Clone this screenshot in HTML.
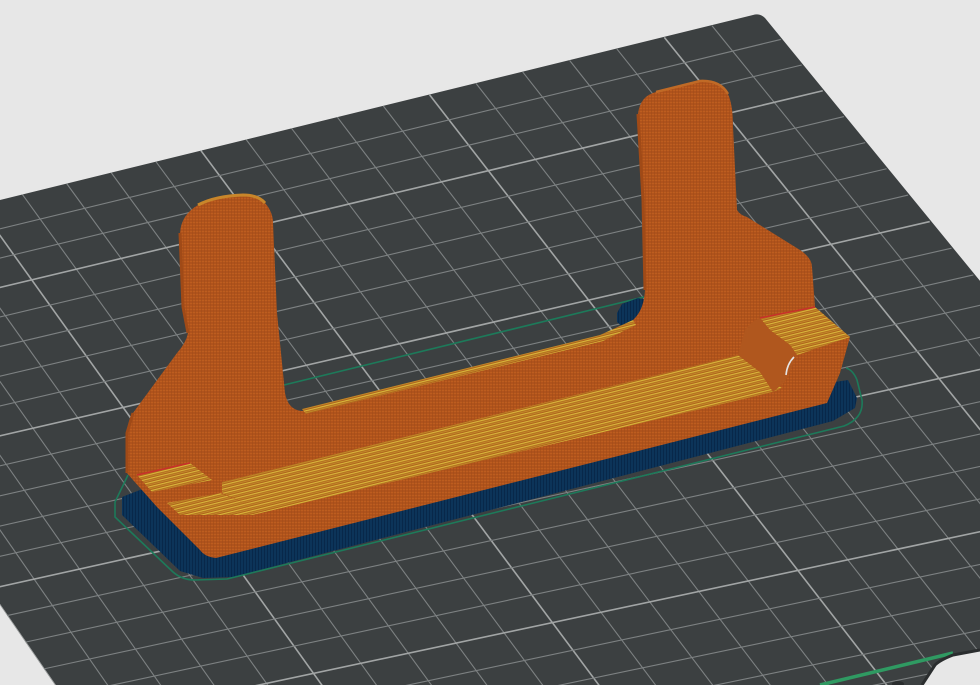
<!DOCTYPE html>
<html><head><meta charset="utf-8"><style>
html,body{margin:0;padding:0;background:#e7e7e7;overflow:hidden;width:980px;height:685px}
svg{display:block}
</style></head><body>
<svg id="s" width="980" height="685" viewBox="0 0 980 685" xmlns="http://www.w3.org/2000/svg">
<defs>
<clipPath id="pc"><path d="M0,200 L753,15 Q760,13 765,18 L1290,660 L980,660 L980,650 L953,655 Q940,660 935,665 L922,685 L55,685 L0,605 Z"/></clipPath>
<pattern id="po" width="3" height="3" patternUnits="userSpaceOnUse"><rect width="3" height="3" fill="#b0531c"/><rect width="3" height="1" fill="#bd5d1f"/><rect x="0" y="0" width="1" height="3" fill="#a24c19" opacity=".6"/></pattern>
<pattern id="py" width="4" height="4" patternUnits="userSpaceOnUse" patternTransform="rotate(-14)"><rect width="4" height="4" fill="#b0621d"/><rect width="4" height="1.2" fill="#d8b83a"/><rect y="2" width="4" height="1" fill="#c08a28"/></pattern>
<pattern id="pb" width="3" height="3" patternUnits="userSpaceOnUse"><rect width="3" height="3" fill="#0c3459"/><rect width="1" height="3" fill="#08284a"/></pattern>
</defs>
<path d="M0,200 L753,15 Q760,13 765,18 L1290,660 L980,660 L980,650 L953,655 Q940,660 935,665 L922,685 L55,685 L0,605 Z" fill="#3c4041"/>
<g id="grid" clip-path="url(#pc)"></g>
<path d="M820,685 L953,653" stroke="#2f9a62" stroke-width="3.5" fill="none"/>
<path d="M922,685 L935,665 Q940,660 953,655 L980,650" stroke="#2a2d2e" stroke-width="3" fill="none"/>
<ellipse cx="898" cy="684" rx="6" ry="3" fill="#2a2d2e"/>
<path d="M284,385 L644,297" stroke="#1d7a5a" stroke-width="1.6" fill="none"/>
<path d="M617,313 L622,304 L638,298 L646,300 L646,326 L626,330 L617,322 Z" fill="url(#pb)"/>
<path d="M122,497 L140,490 L848,380 L857,398 L855,408 L833,421 L233,577 L203,578 L180,571 L122,515 Z" fill="url(#pb)"/>
<path d="M128,475 L115,502 L115,517 L173,572 Q182,580 195,580 L227,579 L844,426 Q864,418 862,400 L857,380 Q853,370 846,368" stroke="#1d7a5a" stroke-width="1.6" fill="none"/>
<path d="M198,205 Q215,196 243,195 Q258,195 265,203 Q273,212 273,223 L277,313 L285,393 Q288,410 302,411 L600,337 L633,320 Q644,310 645,290 L643,200 L638,114 Q640,96 656,92 L700,81 Q720,80 728,94 Q733,105 733,127 L737,210 Q740,215 747,217 L800,250 Q812,258 812,267 L815,307 L850,337 L840,373 L827,403 L216,558 Q205,557 200,550 L157,507 L133,480 L127,473 L127,433 Q128,420 133,413 L177,353 Q186,343 188,333 L183,307 L180,233 Q181,215 198,205 Z" fill="url(#po)"/>
<path d="M198,205 Q215,196 243,195 Q258,195 265,203" stroke="#c9862a" stroke-width="3" fill="none"/>
<path d="M656,92 L700,81 Q720,80 728,94" stroke="#c06a26" stroke-width="2.5" fill="none"/>
<path d="M180,233 L183,307 L188,333 M133,413 L127,433 L127,473 M638,114 L643,200 L645,290" stroke="#a04a17" stroke-width="3" fill="none"/>
<path d="M302,409 L600,335 L633,320 L636,325 L603,341 L306,414 Z" fill="url(#py)"/>
<path d="M222,482 L738,355 L760,372 L782,388 L773,392 L252,515 L245,503 L222,493 Z" fill="url(#py)"/>
<path d="M137,475 L190,463 L203,473 L212,480 L152,492 Z" fill="url(#py)"/>
<path d="M167,503 L220,493 L245,503 L252,515 L180,515 Z" fill="url(#py)"/>
<path d="M137,475 L190,463" stroke="#c8302a" stroke-width="1.5"/>
<path d="M760,318 L815,307 L850,337 L797,355 L790,345 L770,330 Z" fill="url(#py)"/>
<path d="M760,318 L815,307" stroke="#c8302a" stroke-width="1.5"/>
<path d="M738,355 L745,330 Q750,322 760,318 L770,330 L790,345 L797,355 L785,382 L773,392 L760,372 Z" fill="#b0571e"/>
<path d="M794,357 Q787,364 786,375" stroke="#e5e5e5" stroke-width="1.6" fill="none"/>
</svg>
<script>
(function(){
function solve(A,b){var n=b.length;for(var i=0;i<n;i++){var p=i;for(var k=i+1;k<n;k++)if(Math.abs(A[k][i])>Math.abs(A[p][i]))p=k;var t=A[i];A[i]=A[p];A[p]=t;var tb=b[i];b[i]=b[p];b[p]=tb;for(var k=i+1;k<n;k++){var f=A[k][i]/A[i][i];for(var j=i;j<n;j++)A[k][j]-=f*A[i][j];b[k]-=f*b[i];}}var x=new Array(n);for(var i=n-1;i>=0;i--){var s=b[i];for(var j=i+1;j<n;j++)s-=A[i][j]*x[j];x[i]=s/A[i][i];}return x;}
var src=[[0,0],[22,0],[0,10.3],[22,16.6]],dst=[[760,14],[-239,258],[980,283],[55,685]];
var A=[],B=[];for(var i=0;i<4;i++){var x=src[i][0],y=src[i][1],u=dst[i][0],v=dst[i][1];A.push([x,y,1,0,0,0,-x*u,-y*u]);B.push(u);A.push([0,0,0,x,y,1,-x*v,-y*v]);B.push(v);}
var h=solve(A,B);
function P(a,b){var d=h[6]*a+h[7]*b+1;return [(h[0]*a+h[1]*b+h[2])/d,(h[3]*a+h[4]*b+h[5])/d];}
var g=document.getElementById('grid'),ns='http://www.w3.org/2000/svg';
function L(p,q,maj){var l=document.createElementNS(ns,'line');l.setAttribute('x1',p[0]);l.setAttribute('y1',p[1]);l.setAttribute('x2',q[0]);l.setAttribute('y2',q[1]);l.setAttribute('stroke',maj?'#a2a5a5':'#7d8182');l.setAttribute('stroke-width',maj?1.6:1.1);g.appendChild(l);}
for(var a=1;a<23;a++){L(P(a,0),P(a,30),a%5==2);}
for(var b=1;b<31;b++){L(P(0,b),P(22,b),b%5==3);}
})();
</script>
</body></html>
